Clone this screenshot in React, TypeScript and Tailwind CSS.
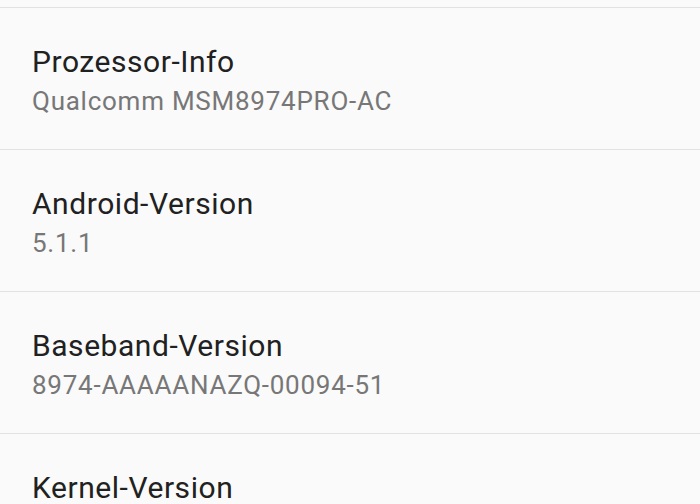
const ROWS = [
  { title: "Prozessor-Info", value: "Qualcomm MSM8974PRO-AC" },
  { title: "Android-Version", value: "5.1.1" },
  { title: "Baseband-Version", value: "8974-AAAAANAZQ-00094-51" },
  { title: "Kernel-Version", value: "3.4.0-perf-g1a2b3c4" },
];

export default function App() {
  return (
    <div
      className="h-[504px] w-[700px] overflow-hidden bg-[#fafafa]"
      style={{ fontFamily: "Roboto, 'Noto Sans', sans-serif" }}
    >
      <div className="h-[7px]" />
      {ROWS.map((r) => (
        <div key={r.title} className="h-[142px] border-t border-[#e2e2e2] px-8 pt-[36px]">
          <div className="text-[30px] leading-[36px] tracking-[0.55px] text-[#212121]">{r.title}</div>
          <div className="text-[26px] leading-[42px] tracking-[0.75px] text-[#777777]">{r.value}</div>
        </div>
      ))}
    </div>
  );
}
